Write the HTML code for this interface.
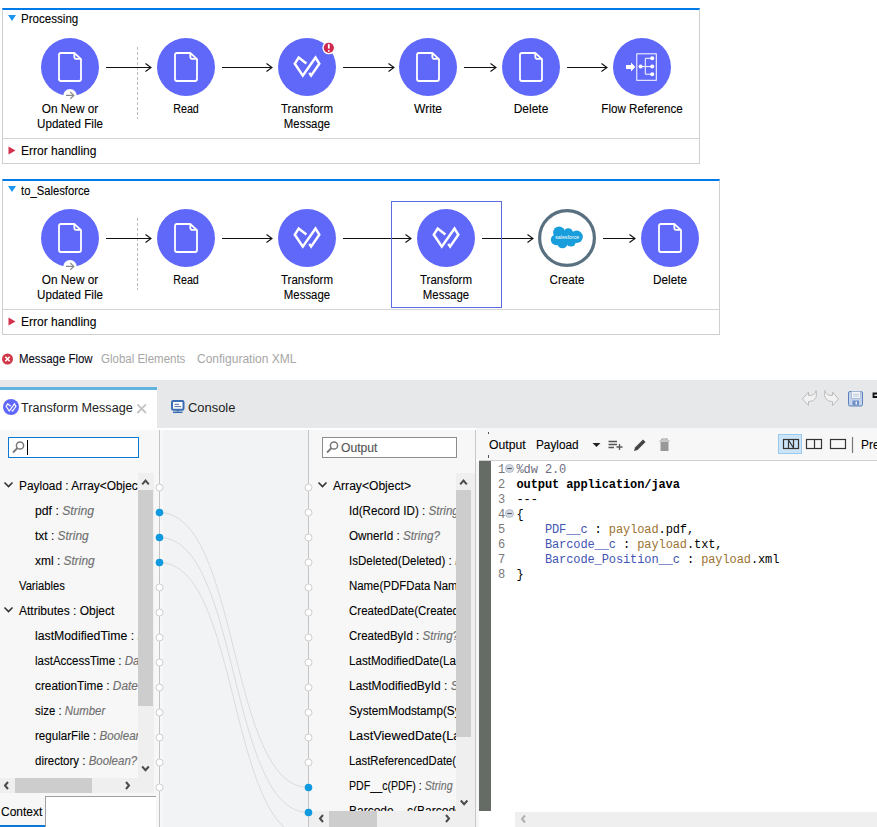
<!DOCTYPE html>
<html><head><meta charset="utf-8">
<style>
*{margin:0;padding:0;box-sizing:border-box}
html,body{width:877px;height:827px;overflow:hidden;background:#fff}
body{position:relative;font-family:"Liberation Sans",sans-serif;font-size:12.5px;color:#000}
.a{position:absolute;white-space:nowrap}
.t{position:absolute;white-space:nowrap;line-height:15px;transform-origin:0 0;-webkit-text-stroke:0.1px #000}
.lbl{position:absolute;text-align:center;line-height:15px;width:200px;white-space:nowrap;-webkit-text-stroke:0.1px #000}
.box{position:absolute;border:1px solid #cfcfcf;border-top:2px solid #007ae6}
.sep{position:absolute;height:1px;background:#d4d4d4}
svg{position:absolute;left:0;top:0;overflow:visible}
i{color:#707070;-webkit-text-stroke:0.15px #707070}
.g{color:#a6a6a6;-webkit-text-stroke:0}
</style></head><body>

<div class="box" style="left:2px;top:8px;width:698px;height:156px"></div>
<div class="sep" style="left:3px;top:138px;width:696px"></div>
<div class="box" style="left:2px;top:179px;width:718px;height:156px"></div>
<div class="sep" style="left:3px;top:309px;width:716px"></div>
<div class="t" style="left:21px;top:12px;transform:scaleX(0.926);">Processing</div>
<div class="t" style="left:21px;top:144px;transform:scaleX(0.961);">Error handling</div>
<div class="t" style="left:21px;top:184px;transform:scaleX(0.901);">to_Salesforce</div>
<div class="t" style="left:21px;top:315px;transform:scaleX(0.961);">Error handling</div>
<svg width="877" height="380"><defs>
<g id="doc"><path d="M-11 -12 a2 2 0 0 1 2 -2 H4.3 L11 -7.9 V12 a2 2 0 0 1 -2 2 H-9 a2 2 0 0 1 -2 -2 Z M4.3 -14 V-10.1 a2 2 0 0 0 2 2 H11" fill="none" stroke="#fff" stroke-width="1.8" stroke-linejoin="round"/></g>
<path id="tmp" d="M-0.6 -3.6 L-8.3 -9.4 L-12.2 -3.3 L-4.2 8.6 L8.5 -9.4 L12.3 -3.3 L4.1 8.6 L2.3 5.9" fill="none" stroke="#fff" stroke-linejoin="miter" stroke-miterlimit="3"/><g id="tm" stroke-width="2.5"><use href="#tmp"/></g>
</defs>
<path d="M8 15 H16 L12 21 Z" fill="#1c95ef"/><path d="M8 186 H16 L12 192 Z" fill="#1c95ef"/>
<path d="M8.5 146.5 V154.5 L15.5 150.5 Z" fill="#d5304e"/><path d="M8.5 317.5 V325.5 L15.5 321.5 Z" fill="#d5304e"/>
<circle cx="70" cy="67" r="29" fill="#6068fa"/>
<use href="#doc" x="70" y="67"/>
<circle cx="186" cy="67" r="29" fill="#6068fa"/>
<use href="#doc" x="186" y="67"/>
<circle cx="307" cy="67" r="29" fill="#6068fa"/>
<use href="#tm" x="307" y="67"/>
<circle cx="428" cy="67" r="29" fill="#6068fa"/>
<use href="#doc" x="428" y="67"/>
<circle cx="531" cy="67" r="29" fill="#6068fa"/>
<use href="#doc" x="531" y="67"/>
<circle cx="642" cy="67" r="29" fill="#6068fa"/>
<circle cx="70" cy="238" r="29" fill="#6068fa"/>
<use href="#doc" x="70" y="238"/>
<circle cx="186" cy="238" r="29" fill="#6068fa"/>
<use href="#doc" x="186" y="238"/>
<circle cx="307" cy="238" r="29" fill="#6068fa"/>
<use href="#tm" x="307" y="238"/>
<circle cx="446" cy="238" r="29" fill="#6068fa"/>
<use href="#tm" x="446" y="238"/>
<circle cx="670" cy="238" r="29" fill="#6068fa"/>
<use href="#doc" x="670" y="238"/>
<circle cx="70" cy="95.8" r="6.8" fill="#fff"/><path d="M66 95.4 H73.6 M70.3 92 L73.8 95.4 L70.3 98.8" fill="none" stroke="#8a8a8a" stroke-width="1.2"/>
<circle cx="70" cy="266.8" r="6.8" fill="#fff"/><path d="M66 266.4 H73.6 M70.3 263 L73.8 266.4 L70.3 269.8" fill="none" stroke="#8a8a8a" stroke-width="1.2"/>
<path d="M137.5 47 V119 M137.5 218 V290" stroke="#bdbdbd" stroke-width="1" stroke-dasharray="3 2"/>
<g stroke="#111" stroke-width="1.1" fill="none">
<path d="M106 67.5 H151 M145.5 63.5 L151 67.5 L145.5 71.5"/>
<path d="M222 67.5 H272 M266.5 63.5 L272 67.5 L266.5 71.5"/>
<path d="M343 67.5 H394 M388.5 63.5 L394 67.5 L388.5 71.5"/>
<path d="M464 67.5 H496 M490.5 63.5 L496 67.5 L490.5 71.5"/>
<path d="M567 67.5 H607 M601.5 63.5 L607 67.5 L601.5 71.5"/>
<path d="M106 238.5 H151 M145.5 234.5 L151 238.5 L145.5 242.5"/>
<path d="M222 238.5 H272 M266.5 234.5 L272 238.5 L266.5 242.5"/>
<path d="M343 238.5 H411 M405.5 234.5 L411 238.5 L405.5 242.5"/>
<path d="M482 238.5 H533 M527.5 234.5 L533 238.5 L527.5 242.5"/>
<path d="M603 238.5 H635 M629.5 234.5 L635 238.5 L629.5 242.5"/>
</g>
<circle cx="328.8" cy="47.8" r="6.5" fill="#fff"/><circle cx="328.8" cy="47.8" r="5.1" fill="#d0284c"/>
<path d="M328.8 44.2 V48.6" stroke="#fff" stroke-width="1.8"/><circle cx="328.8" cy="50.9" r="0.95" fill="#fff"/>
<g fill="#fff">
 <rect x="636.8" y="53.8" width="19.5" height="26.5" fill="none" stroke="#fff" stroke-width="1"/>
 <path d="M626 65 H631 V62.5 L635.3 67 L631 71.5 V69 H626 Z"/>
 <circle cx="640.6" cy="66.6" r="2"/><circle cx="652.2" cy="58.3" r="2"/><circle cx="652.2" cy="66.6" r="2"/><circle cx="652.2" cy="74.2" r="2"/>
 <path d="M640.6 66.6 H652 M645.3 58.3 V74.2 M645.3 58.3 H652 M645.3 74.2 H652" stroke="#fff" stroke-width="1" fill="none"/>
</g>
<circle cx="567" cy="238" r="27.4" fill="#fff" stroke="#587080" stroke-width="3.2"/>
<g fill="#199edc">
 <circle cx="559.1" cy="232.6" r="6"/><circle cx="568.3" cy="233.2" r="4.9"/><circle cx="576.6" cy="236.8" r="6.2"/>
 <circle cx="556.2" cy="239.8" r="5.4"/><circle cx="562.4" cy="243" r="5.3"/><circle cx="571" cy="241.8" r="4.8"/><ellipse cx="566" cy="238" rx="10" ry="6"/>
</g>
<text x="567.2" y="239.2" font-size="5.2" fill="#fff" text-anchor="middle" font-family="Liberation Sans" textLength="24">salesforce</text>
<rect x="391.5" y="201.5" width="110" height="106" fill="none" stroke="#5b6be0" stroke-width="1"/></svg>
<div class="lbl" style="left:-30px;top:102px;transform:scaleX(0.945);">On New or</div>
<div class="lbl" style="left:-30px;top:117px;transform:scaleX(0.931);">Updated File</div>
<div class="lbl" style="left:86px;top:102px;transform:scaleX(0.859);">Read</div>
<div class="lbl" style="left:207px;top:102px;transform:scaleX(0.920);">Transform</div>
<div class="lbl" style="left:207px;top:117px;transform:scaleX(0.912);">Message</div>
<div class="lbl" style="left:328px;top:102px;transform:scaleX(0.966);">Write</div>
<div class="lbl" style="left:431px;top:102px;transform:scaleX(0.960);">Delete</div>
<div class="lbl" style="left:542px;top:102px;transform:scaleX(0.930);">Flow Reference</div>
<div class="lbl" style="left:-30px;top:273px;transform:scaleX(0.945);">On New or</div>
<div class="lbl" style="left:-30px;top:288px;transform:scaleX(0.931);">Updated File</div>
<div class="lbl" style="left:86px;top:273px;transform:scaleX(0.859);">Read</div>
<div class="lbl" style="left:207px;top:273px;transform:scaleX(0.920);">Transform</div>
<div class="lbl" style="left:207px;top:288px;transform:scaleX(0.912);">Message</div>
<div class="lbl" style="left:346px;top:273px;transform:scaleX(0.920);">Transform</div>
<div class="lbl" style="left:346px;top:288px;transform:scaleX(0.912);">Message</div>
<div class="lbl" style="left:467px;top:273px;transform:scaleX(0.932);">Create</div>
<div class="lbl" style="left:570px;top:273px;transform:scaleX(0.943);">Delete</div>
<svg width="20" height="20" style="left:0;top:350px"><circle cx="7.5" cy="9" r="5.5" fill="#d0384a"/><path d="M5.3 6.8 L9.7 11.2 M9.7 6.8 L5.3 11.2" stroke="#fff" stroke-width="1.6"/></svg>
<div class="t" style="left:19px;top:352px;transform:scaleX(0.912);-webkit-text-stroke:0.1px #000;color:#0a0a20">Message Flow</div>
<div class="t" style="left:101px;top:352px;transform:scaleX(0.920);"><span class="g">Global Elements</span></div>
<div class="t" style="left:197px;top:352px;transform:scaleX(0.961);"><span class="g">Configuration XML</span></div>
<div class="a" style="left:0;top:380px;width:877px;height:48px;background:#e7e8ea"></div>
<div class="a" style="left:0;top:387px;width:157px;height:43px;background:#fff;border-top:3px solid #60b2df"></div>
<svg width="20" height="20" style="left:0;top:397px"><circle cx="11" cy="10" r="8" fill="#6068fa"/><g transform="translate(11 10.6) scale(0.4)" stroke-width="3"><use href="#tmp"/></g></svg>
<div class="t" style="left:21px;top:401px;transform:scaleX(1.009);color:#222;-webkit-text-stroke:0"><span style="-webkit-text-stroke:0">Transform Message</span></div>
<svg width="14" height="14" style="left:135px;top:402px"><path d="M2.3 2.3 L11 11 M11 2.3 L2.3 11" stroke="#c4c4c4" stroke-width="1.8"/></svg>
<svg width="16" height="16" style="left:170px;top:399px"><rect x="2" y="2" width="11.5" height="8.8" rx="1.2" fill="#fff" stroke="#3b6db4" stroke-width="2"/><path d="M4.5 5.3 H9 M4.5 7.6 H11" stroke="#3a5b94" stroke-width="0.9"/><path d="M7.75 11 V12.5" stroke="#3b6db4" stroke-width="2"/><path d="M3 13.3 H12.5" stroke="#3b6db4" stroke-width="1.5"/></svg>
<div class="t" style="left:187.5px;top:401px;transform:scaleX(1.033);color:#222;-webkit-text-stroke:0"><span style="-webkit-text-stroke:0">Console</span></div>
<svg width="80" height="20" style="left:800px;top:389px">
 <path d="M2.5 10 L8.5 3 V6.5 C12.5 6.5 15.5 5.5 16 1.5 C18 9 14 12.5 8.5 12.5 V16.5 Z" fill="#f2f2f2" stroke="#bdbdbd" stroke-width="1"/>
 <path d="M38.5 10 L32.5 3 V6.5 C28.5 6.5 25.5 5.5 25 1.5 C23 9 27 12.5 32.5 12.5 V16.5 Z" fill="#f2f2f2" stroke="#bdbdbd" stroke-width="1"/>
 <rect x="48.5" y="2.5" width="14" height="14.5" rx="1.5" fill="#c3d4ec" stroke="#5d81bd" stroke-width="1"/>
 <rect x="51.5" y="2.5" width="9" height="7" fill="#f5f7fb" stroke="#9fb3d3" stroke-width="0.8"/><path d="M53 5.2 H59 M53 7.2 H59" stroke="#a9bad4" stroke-width="0.8"/>
 <rect x="52.5" y="11.5" width="6.5" height="5" fill="#6f8fc6"/><rect x="55.5" y="12.5" width="1.5" height="3" fill="#e8eef8"/>
 <path d="M80 4.5 H73.5 V8 H80" fill="none" stroke="#111" stroke-width="1.8"/>
</svg>
<div class="a" style="left:0;top:428px;width:877px;height:2px;background:#fff"></div>
<div class="a" style="left:0;top:430px;width:159px;height:397px;background:#f7f7f7"></div>
<div class="a" style="left:160px;top:430px;width:148px;height:397px;background:#f2f3f5"></div>
<div class="a" style="left:160px;top:430px;width:3px;height:397px;background:#f7f7f7"></div>
<div class="a" style="left:309px;top:430px;width:166px;height:397px;background:#f7f7f7"></div>
<div class="a" style="left:159px;top:430px;width:1px;height:397px;background:#c4c4c4"></div>
<div class="a" style="left:308px;top:430px;width:1px;height:397px;background:#c4c4c4"></div>
<div class="a" style="left:475px;top:430px;width:1px;height:397px;background:#c8c8c8"></div>
<div class="a" style="left:476px;top:428px;width:401px;height:32px;background:#f7f7f7"></div>
<div class="a" style="left:479px;top:460px;width:398px;height:1px;background:#cfcfcf"></div>
<div class="a" style="left:488px;top:432px;width:1px;height:2px;background:#555"></div>
<div class="a" style="left:488px;top:455px;width:1px;height:3px;background:#555"></div>
<div class="a" style="left:476px;top:461px;width:401px;height:366px;background:#fff"></div>
<div class="a" style="left:476px;top:461px;width:3px;height:366px;background:#f5f5f5"></div>
<div class="a" style="left:8px;top:437px;width:131px;height:21px;background:#fff;border:1px solid #0a78d6"></div>
<svg width="16" height="16" style="left:11px;top:440px"><circle cx="9" cy="5.5" r="3.6" fill="none" stroke="#777" stroke-width="1.5"/><path d="M6.5 8 L2 12.5" stroke="#777" stroke-width="1.8"/></svg>
<div class="a" style="left:27px;top:440px;width:1px;height:15px;background:#000"></div>
<div class="a" style="left:322px;top:437px;width:135px;height:21px;background:#fff;border:1px solid #8c8c8c"></div>
<svg width="16" height="16" style="left:325px;top:440px"><circle cx="9" cy="5.5" r="3.6" fill="none" stroke="#777" stroke-width="1.5"/><path d="M6.5 8 L2 12.5" stroke="#777" stroke-width="1.8"/></svg>
<div class="t" style="left:341px;top:441px;transform:scaleX(0.970);"><span style="color:#555;-webkit-text-stroke:0.15px #555">Output</span></div>
<div class="a" style="left:0;top:430px;width:138px;height:348px;overflow:hidden">
<div class="t" style="left:19px;top:49px;transform:scaleX(0.952);">Payload : Array&lt;Object&gt;</div>
<div class="t" style="left:35px;top:74px;transform:scaleX(0.978);">pdf : <i>String</i></div>
<div class="t" style="left:35px;top:99px;transform:scaleX(0.954);">txt : <i>String</i></div>
<div class="t" style="left:35px;top:124px;transform:scaleX(0.955);">xml : <i>String</i></div>
<div class="t" style="left:19px;top:149px;transform:scaleX(0.896);">Variables</div>
<div class="t" style="left:19px;top:174px;transform:scaleX(0.960);">Attributes : Object</div>
<div class="t" style="left:35px;top:199px;transform:scaleX(0.981);">lastModifiedTime : <i>DateTime</i></div>
<div class="t" style="left:35px;top:224px;transform:scaleX(0.920);">lastAccessTime : <i>DateTime</i></div>
<div class="t" style="left:35px;top:249px;transform:scaleX(0.947);">creationTime : <i>DateTime</i></div>
<div class="t" style="left:35px;top:274px;transform:scaleX(0.910);">size : <i>Number</i></div>
<div class="t" style="left:35px;top:299px;transform:scaleX(0.928);">regularFile : <i>Boolean</i></div>
<div class="t" style="left:35px;top:324px;transform:scaleX(0.919);">directory : <i>Boolean?</i></div>
</div>
<svg width="160" height="400" style="left:0;top:428px"><path d="M4.5 179.5 L8.5 183.5 L12.5 179.5 M4.5 54.5 L8.5 58.5 L12.5 54.5" fill="none" stroke="#333" stroke-width="1.6"/></svg>
<div class="a" style="left:138px;top:473px;width:16px;height:305px;background:#efefef"></div>
<div class="a" style="left:138px;top:490px;width:15px;height:216px;background:#cdcdcd"></div>
<div class="a" style="left:0;top:778px;width:154px;height:15px;background:#efefef"></div>
<div class="a" style="left:15px;top:778px;width:77px;height:15px;background:#cdcdcd"></div>
<svg width="160" height="400" style="left:0;top:428px" fill="none" stroke="#4a4a4a" stroke-width="2">
 <path d="M142.2 56.3 L145.5 52.6 L148.8 56.3"/><path d="M142.2 338.5 L145.5 342.2 L148.8 338.5"/>
 <path d="M8 354 L5 357.5 L8 361"/><path d="M126 354 L129 357.5 L126 361"/>
</svg>
<div class="a" style="left:45px;top:796px;width:111px;height:31px;background:#fff;border-left:1px solid #a0a0a0;border-top:1px solid #a0a0a0"></div>
<div class="t" style="left:1px;top:805px;transform:scaleX(0.960);">Context</div>
<div class="a" style="left:0;top:825px;width:45px;height:2px;background:#0a78d6"></div>
<div class="a" style="left:309px;top:430px;width:147px;height:381px;overflow:hidden">
<div class="t" style="left:24px;top:49px;transform:scaleX(0.968);">Array&lt;Object&gt;</div>
<div class="t" style="left:40px;top:74px;transform:scaleX(0.930);">Id(Record ID) : <i>String</i></div>
<div class="t" style="left:40px;top:99px;transform:scaleX(0.935);">OwnerId : <i>String?</i></div>
<div class="t" style="left:40px;top:124px;transform:scaleX(0.924);">IsDeleted(Deleted) : <i>Boolean</i></div>
<div class="t" style="left:40px;top:149px;transform:scaleX(0.914);">Name(PDFData Name)</div>
<div class="t" style="left:40px;top:174px;transform:scaleX(0.920);">CreatedDate(Created Date)</div>
<div class="t" style="left:40px;top:199px;transform:scaleX(0.920);">CreatedById : <i>String?</i></div>
<div class="t" style="left:40px;top:224px;transform:scaleX(0.927);">LastModifiedDate(Last)</div>
<div class="t" style="left:40px;top:249px;transform:scaleX(0.957);">LastModifiedById : <i>String</i></div>
<div class="t" style="left:40px;top:274px;transform:scaleX(0.939);">SystemModstamp(System)</div>
<div class="t" style="left:40px;top:299px;transform:scaleX(1.024);">LastViewedDate(Last)</div>
<div class="t" style="left:40px;top:324px;transform:scaleX(0.901);">LastReferencedDate(Last)</div>
<div class="t" style="left:40px;top:349px;transform:scaleX(0.852);">PDF__c(PDF) : <i>String</i></div>
<div class="t" style="left:40px;top:374px;transform:scaleX(0.960);">Barcode__c(Barcode)</div>
</div>
<svg width="160" height="400" style="left:309px;top:428px"><path d="M9.5 54.5 L13.5 58.5 L17.5 54.5" fill="none" stroke="#333" stroke-width="1.6"/></svg>
<div class="a" style="left:456px;top:473px;width:19px;height:354px;background:#efefef"></div>
<div class="a" style="left:456px;top:490px;width:15px;height:247px;background:#cdcdcd"></div>
<div class="a" style="left:309px;top:811px;width:147px;height:16px;background:#efefef"></div>
<div class="a" style="left:329px;top:811px;width:48px;height:16px;background:#cdcdcd"></div>
<svg width="180" height="400" style="left:300px;top:428px" fill="none" stroke="#4a4a4a" stroke-width="2">
 <path d="M160.2 56.3 L163.5 52.6 L166.8 56.3"/><path d="M160.8 372.5 L164.1 376.2 L167.4 372.5"/>
 <path d="M23 387 L20 390.5 L23 394"/><path d="M146 387 L149 390.5 L146 394"/>
</svg>
<svg width="877" height="827" style="left:0;top:0">
<g fill="none" stroke="#dcdcdc" stroke-width="1">
<path d="M159.5 512.5 C240 512.5 228 787.5 308.5 787.5"/>
<path d="M159.5 537.5 C240 537.5 228 812.5 308.5 812.5"/>
<path d="M159.5 562.5 C240 562.5 228 837.5 308.5 837.5"/>
</g><g fill="#fff" stroke="#c8c8c8" stroke-width="0.9">
<circle cx="159.5" cy="487.5" r="3.5"/>
<circle cx="159.5" cy="587.5" r="3.5"/>
<circle cx="159.5" cy="612.5" r="3.5"/>
<circle cx="159.5" cy="637.5" r="3.5"/>
<circle cx="159.5" cy="662.5" r="3.5"/>
<circle cx="159.5" cy="687.5" r="3.5"/>
<circle cx="159.5" cy="712.5" r="3.5"/>
<circle cx="159.5" cy="737.5" r="3.5"/>
<circle cx="159.5" cy="762.5" r="3.5"/>
<circle cx="159.5" cy="787.5" r="3.5"/>
<circle cx="308.5" cy="487.5" r="3.5"/>
<circle cx="308.5" cy="512.5" r="3.5"/>
<circle cx="308.5" cy="537.5" r="3.5"/>
<circle cx="308.5" cy="562.5" r="3.5"/>
<circle cx="308.5" cy="587.5" r="3.5"/>
<circle cx="308.5" cy="612.5" r="3.5"/>
<circle cx="308.5" cy="637.5" r="3.5"/>
<circle cx="308.5" cy="662.5" r="3.5"/>
<circle cx="308.5" cy="687.5" r="3.5"/>
<circle cx="308.5" cy="712.5" r="3.5"/>
<circle cx="308.5" cy="737.5" r="3.5"/>
<circle cx="308.5" cy="762.5" r="3.5"/>
</g><g fill="#0f9ae0">
<circle cx="159.5" cy="512.5" r="3.8"/>
<circle cx="159.5" cy="537.5" r="3.8"/>
<circle cx="159.5" cy="562.5" r="3.8"/>
<circle cx="308.5" cy="787.5" r="3.8"/>
<circle cx="308.5" cy="812.5" r="3.8"/>
</g></svg>
<div class="t" style="left:489px;top:438px;transform:scaleX(0.976);">Output</div>
<div class="t" style="left:536px;top:438px;transform:scaleX(0.943);">Payload</div>
<svg width="120" height="20" style="left:585px;top:435px">
 <path d="M7.5 8 H15.5 L11.5 12 Z" fill="#222"/>
 <path d="M23.5 6.5 H32 M23.5 9.5 H32 M23.5 12.5 H29 M34.5 9 V15 M31.5 12 H37.5" stroke="#555" stroke-width="1.3"/>
 <path d="M49 16 L50 12.5 L58 4.5 L60.5 7 L52.5 15 Z" fill="#444"/>
 <path d="M74.5 6 H84.5 M77 5 V4 H82 V5" stroke="#999" stroke-width="1.2" fill="none"/><rect x="75.5" y="7" width="8" height="9" fill="#999"/>
</svg>
<div class="a" style="left:778px;top:434px;width:24px;height:20px;background:#cce4f7;border:1px solid #99c9ef"></div>
<svg width="100" height="30" style="left:777px;top:427px" fill="none" stroke="#333" stroke-width="1.2">
 <rect x="6.5" y="12.5" width="15" height="9"/><path d="M11.5 12.5 V21.5 M11.5 13 L16.5 21 M16.5 12.5 V21.5"/>
 <rect x="29.5" y="12.5" width="15" height="9"/><path d="M37.5 12.5 V21.5"/>
 <rect x="53.5" y="12.5" width="15" height="9"/>
 <path d="M75.5 10 V26" stroke="#777"/>
</svg>
<div class="t" style="left:861px;top:438px;transform:scaleX(0.950);">Preview</div>
<div class="a" style="left:479px;top:461px;width:12px;height:350px;background:#646c65"></div>
<div class="a" style="left:515px;top:812px;width:362px;height:15px;background:#efefef"></div>
<svg width="20" height="20" style="left:515px;top:811px"><path d="M10 4.5 L7 8 L10 11.5" fill="none" stroke="#b0b0b0" stroke-width="2"/></svg>
<div class="a" style="left:498px;top:463px;font-family:'Liberation Mono',monospace;font-size:12px;line-height:15px;color:#787878;letter-spacing:-0.1px"><div>1</div><div>2</div><div>3</div><div>4</div><div>5</div><div>6</div><div>7</div><div>8</div></div>
<div class="a" style="left:516.5px;top:463px;font-family:'Liberation Mono',monospace;font-size:12px;line-height:15px;color:#000;letter-spacing:-0.1px"><div style="white-space:pre"><span style="color:#6e6e80">%dw 2.0</span></div><div style="white-space:pre"><b>output application/java</b></div><div style="white-space:pre">---</div><div style="white-space:pre">{</div><div style="white-space:pre">    <span style="color:#4254b4">PDF__c</span> : <span style="color:#9c7332">payload</span>.pdf,</div><div style="white-space:pre">    <span style="color:#4254b4">Barcode__c</span> : <span style="color:#9c7332">payload</span>.txt,</div><div style="white-space:pre">    <span style="color:#4254b4">Barcode_Position__c</span> : <span style="color:#9c7332">payload</span>.xml</div><div style="white-space:pre">}</div></div>
<svg width="20" height="60" style="left:503px;top:461px">
 <circle cx="6.5" cy="7.5" r="4" fill="#d3dae5" stroke="#a9b3c2" stroke-width="0.8"/><path d="M4.2 7.5 H8.8" stroke="#555" stroke-width="1.1"/>
 <circle cx="6.5" cy="52.5" r="4" fill="#d3dae5" stroke="#a9b3c2" stroke-width="0.8"/><path d="M4.2 52.5 H8.8" stroke="#555" stroke-width="1.1"/>
</svg>
</body></html>
